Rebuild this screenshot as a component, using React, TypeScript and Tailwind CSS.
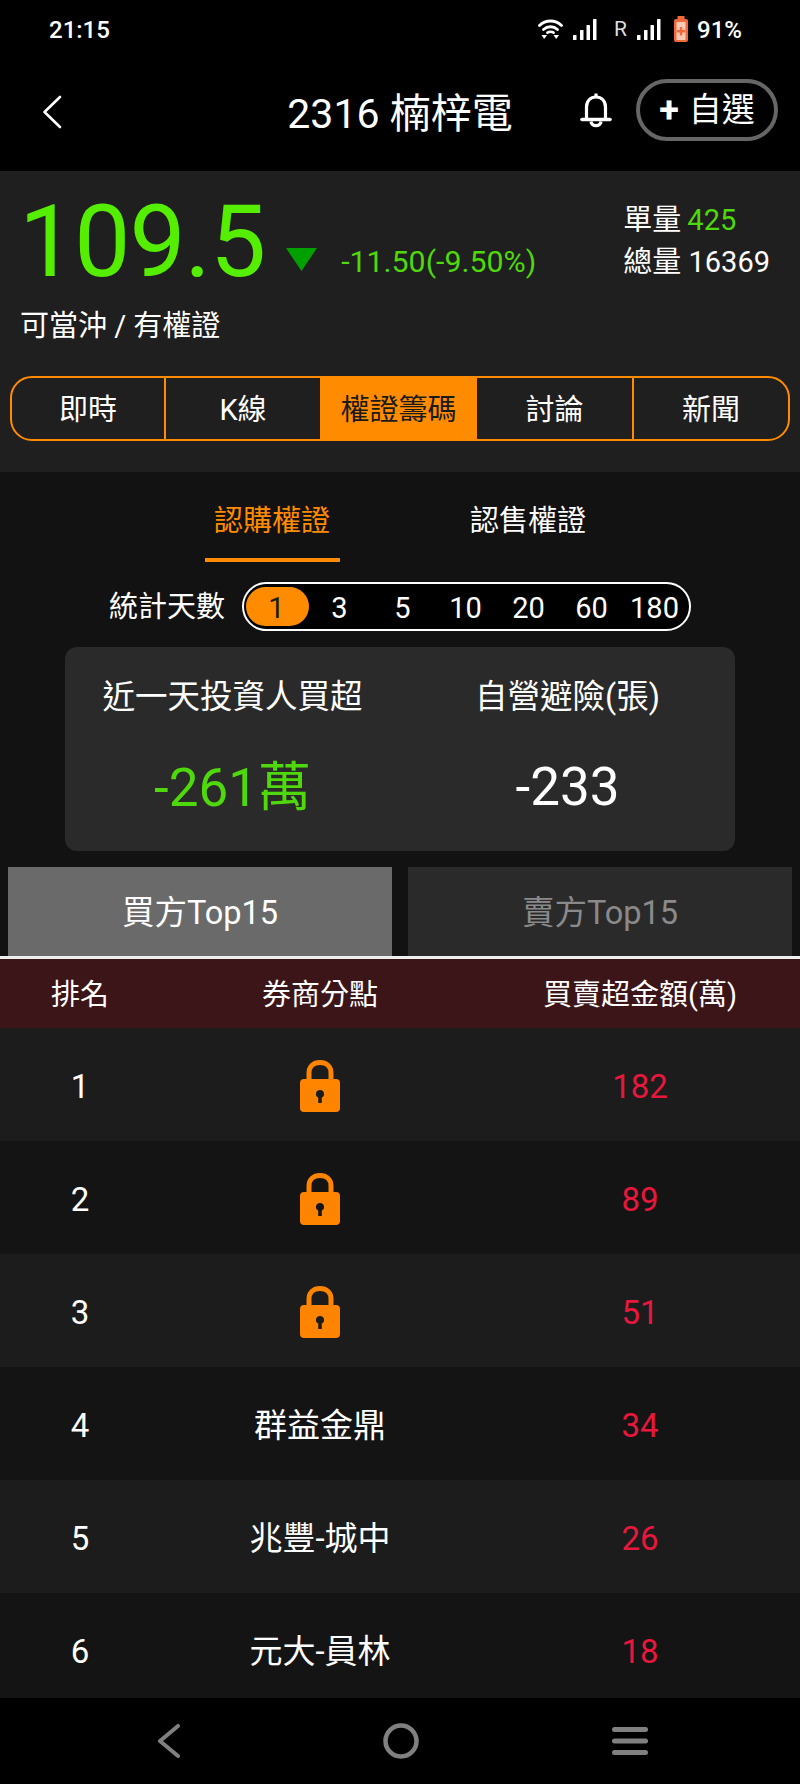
const rows = [
  { rank: 1, broker: null, amount: "182" },
  { rank: 2, broker: null, amount: "89" },
  { rank: 3, broker: null, amount: "51" },
  { rank: 4, broker: "群益金鼎", amount: "34" },
  { rank: 5, broker: "兆豐-城中", amount: "26" },
  { rank: 6, broker: "元大-員林", amount: "18" },
];

const tabs = ["即時", "K線", "權證籌碼", "討論", "新聞"];
const days = ["1", "3", "5", "10", "20", "60", "180"];

const Signal = () => (
  <svg width="24" height="21" viewBox="0 0 24 21" fill="#fff">
    <rect x="0" y="16" width="3.5" height="5" rx="0.5" />
    <rect x="7" y="11" width="3.5" height="10" rx="0.5" />
    <rect x="13.5" y="6" width="3.5" height="15" rx="0.5" />
    <rect x="20" y="0" width="3.5" height="21" rx="0.5" />
  </svg>
);

const Wifi = () => (
  <svg width="25" height="21" viewBox="0 0 25 21" fill="none" stroke="#fff" strokeWidth="2.8" strokeLinecap="round">
    <path d="M1.5 6.5C7.5 0.5 17.5 0.5 23.5 6.5" />
    <path d="M5.5 10.5C9.5 6.8 15.5 6.8 19.5 10.5" />
    <path d="M9.5 13.6C11 12.6 14 12.6 15.5 13.6" />
    <path d="M3.5 16H9L6.2 20Z" fill="#fff" stroke="none" />
    <path d="M15.5 16H21L18.2 20Z" fill="#fff" stroke="none" />
  </svg>
);

const Battery = () => (
  <svg width="16" height="27" viewBox="0 0 16 27">
    <rect x="4.5" y="0" width="7" height="3" fill="#f0693a" />
    <rect x="1" y="3" width="14" height="23" rx="2" fill="#f0693a" />
    <rect x="3.5" y="6" width="9" height="18" fill="#f8c9b4" />
    <path d="M6.8 11h2.4v3h3v2.4h-3v3H6.8v-3h-3V14h3z" fill="#f0693a" />
  </svg>
);

const Bell = () => (
  <svg width="32" height="36" viewBox="0 0 32 36" fill="none" stroke="#fff" strokeWidth="3.2" strokeLinejoin="round">
    <path d="M16 1.5V5" />
    <path d="M6.5 26V15C6.5 9 10.5 5 16 5S25.5 9 25.5 15V26" />
    <path d="M2 27.5H30" strokeLinecap="round" strokeWidth="3.6" />
    <path d="M11 29.5C11.5 35 20.5 35 21 29.5" />
  </svg>
);

const Lock = () => (
  <svg className="-mt-[2px]" width="40" height="52" viewBox="0 0 40 52">
    <path d="M9 22V13C9 6.5 13.5 2.5 20 2.5S31 6.5 31 13V22" fill="none" stroke="#ff8400" strokeWidth="5" />
    <path
      fillRule="evenodd"
      d="M4 19H36A4 4 0 0 1 40 23V48A4 4 0 0 1 36 52H4A4 4 0 0 1 0 48V23A4 4 0 0 1 4 19ZM20 30A4 4 0 0 0 18.2 37.6V43H21.8V37.6A4 4 0 0 0 20 30Z"
      fill="#ff8400"
    />
  </svg>
);

export default function App() {
  return (
    <div className="flex h-[1784px] w-[800px] flex-col overflow-hidden bg-black font-['Roboto','Noto_Sans_CJK_TC',sans-serif] text-white">
      {/* Status bar */}
      <div className="flex h-[60px] shrink-0 items-center pb-[1px] pl-[49px] pr-[58px]">
        <span className="text-[24px] font-medium leading-none">21:15</span>
        <div className="ml-auto flex items-center">
          <Wifi />
          <div className="ml-[10px]"><Signal /></div>
          <span className="ml-[17px] text-[21px] leading-none text-[#ddd]">R</span>
          <div className="ml-[10px]"><Signal /></div>
          <div className="ml-[12px]"><Battery /></div>
          <span className="ml-[8px] text-[24px] font-medium leading-none">91%</span>
        </div>
      </div>

      {/* Header */}
      <div className="grid h-[111px] shrink-0 grid-cols-[1fr_auto_1fr] items-center pb-[2px]">
        <div className="mb-[6px] pl-[42px]">
          <svg width="20" height="34" viewBox="0 0 20 34" fill="none" stroke="#fff" strokeWidth="2.6" strokeLinecap="round" strokeLinejoin="round">
            <path d="M18 2L2.5 17L18 32" />
          </svg>
        </div>
        <div className="text-[41px] leading-none">2316 楠梓電</div>
        <div className="mb-[10px] flex items-center justify-end pr-[22px]">
          <Bell />
          <div className="ml-[24px] flex h-[62px] w-[142px] items-center justify-center gap-[10px] rounded-full border-[4px] border-[#666]">
            <span className="text-[36px] font-bold leading-none">+</span>
            <span className="text-[33px] leading-none">自選</span>
          </div>
        </div>
      </div>

      {/* Quote */}
      <div className="h-[301px] shrink-0 bg-[#1f1f1f] pt-[16px]">
        <div className="flex h-[105px] items-start pl-[19px] pr-[30px]">
          <span className="mt-[5px] text-[100px] leading-[100px] tracking-[-1px] text-[#55ee00]">109.5</span>
          <svg className="ml-[21px] mt-[61px]" width="31" height="23" viewBox="0 0 31 23">
            <path d="M0 0H31L15.5 23Z" fill="#00a000" />
          </svg>
          <span className="ml-[24px] mt-[60px] text-[30.3px] leading-none text-[#4fd80c]">-11.50(-9.50%)</span>
          <div className="ml-auto flex flex-col gap-[13px] pt-[19px]">
            <span className="text-[29px] leading-[29px]">
              單量<span className="ml-[6px] text-[#4fd80c]">425</span>
            </span>
            <span className="text-[29px] leading-[29px]">總量 16369</span>
          </div>
        </div>
        <div className="mt-[18px] pl-[20px] text-[29px] leading-[32px]">可當沖 / 有權證</div>
        <div className="mx-[10px] mt-[34px] grid h-[65px] grid-cols-[152px_156px_157px_155px_1fr] overflow-hidden rounded-[22px] border-2 border-[#ff8c00]">
          {tabs.map((t, i) => (
            <div
              key={t}
              className={`flex items-center justify-center pt-[3px] text-[29px] leading-none ${i === 2 ? "bg-[#ff8c00] text-[#1a1a1a]" : ""} ${i === 1 || i === 4 ? "border-l-2 border-[#ff8c00]" : ""}`}
            >
              {t}
            </div>
          ))}
        </div>
      </div>

      {/* Warrants */}
      <div className="flex min-h-0 flex-1 flex-col overflow-hidden bg-[#121212]">
        <div className="flex h-[90px] shrink-0 justify-center gap-[121px]">
          <div className="flex w-[135px] items-center justify-center border-b-[4px] border-[#ff8c00] pt-[12px] text-[29px] leading-none text-[#ff8c00]">認購權證</div>
          <div className="flex w-[135px] items-center justify-center pt-[8px] text-[29px] leading-none">認售權證</div>
        </div>

        <div className="mt-[20px] flex shrink-0 items-center justify-center gap-[17px]">
          <span className="pt-[2px] text-[29px] leading-none">統計天數</span>
          <div className="flex h-[49px] w-[449px] items-center rounded-full border-2 border-white bg-black px-[2px]">
            {days.map((d, i) => (
              <div
                key={d}
                className={`flex h-[39px] flex-1 items-center justify-center rounded-full pr-[2px] pt-[3px] text-[29px] leading-none ${i === 0 ? "bg-[#ff8c00] text-[#1a1a1a]" : ""}`}
              >
                {d}
              </div>
            ))}
          </div>
        </div>

        <div className="mx-[65px] mt-[16px] grid h-[204px] shrink-0 grid-cols-2 rounded-[12px] bg-[#2a2a2a] pt-[34px] text-center">
          <div>
            <div className="text-[32.5px] leading-[32px]">近一天投資人買超</div>
            <div className="mt-[48px] text-[53px] leading-[54px] text-[#4fd80c]">-261萬</div>
          </div>
          <div>
            <div className="text-[32.5px] leading-[32px]">自營避險(張)</div>
            <div className="mt-[47px] text-[53px] leading-[54px]">-233</div>
          </div>
        </div>

        <div className="mt-[16px] flex h-[89px] shrink-0 gap-[16px] px-[8px]">
          <div className="flex flex-1 items-center justify-center bg-[#6a6a6a] pt-[3px] text-[32.5px] leading-none">買方Top15</div>
          <div className="flex flex-1 items-center justify-center bg-[#2a2a2a] pt-[3px] text-[32.5px] leading-none text-[#8a8a8a]">賣方Top15</div>
        </div>

        <div className="grid h-[72px] shrink-0 grid-cols-[160px_320px_320px] items-center border-t-[3px] border-[#eee] bg-[#3c1518] pt-[4px] text-center text-[29px] leading-none">
          <div>排名</div>
          <div>券商分點</div>
          <div>買賣超金額(萬)</div>
        </div>

        {rows.map((r, i) => (
          <div
            key={r.rank}
            className={`grid h-[113px] shrink-0 grid-cols-[160px_320px_320px] items-center pt-[4px] text-center text-[33px] leading-none ${i % 2 === 0 ? "bg-[#1c1c1c]" : "bg-[#141414]"}`}
          >
            <div>{r.rank}</div>
            <div className="flex justify-center">{r.broker ?? <Lock />}</div>
            <div className="text-[#e8173c]">{r.amount}</div>
          </div>
        ))}
      </div>

      {/* Android nav */}
      <div className="flex h-[86px] shrink-0 items-center pl-[157px]">
        <svg width="24" height="34" viewBox="0 0 24 34" fill="none" stroke="#808080" strokeWidth="4" strokeLinecap="round" strokeLinejoin="round">
          <path d="M21 2L3 17L21 32" />
        </svg>
        <svg className="ml-[202px]" width="36" height="36" viewBox="0 0 36 36" fill="none" stroke="#808080" strokeWidth="4.5">
          <circle cx="18" cy="18" r="15.5" />
        </svg>
        <svg className="ml-[193px]" width="36" height="28" viewBox="0 0 36 28" fill="#808080">
          <rect x="0" y="0" width="36" height="5" rx="2.5" />
          <rect x="0" y="11.5" width="36" height="5" rx="2.5" />
          <rect x="0" y="23" width="36" height="5" rx="2.5" />
        </svg>
      </div>
    </div>
  );
}
